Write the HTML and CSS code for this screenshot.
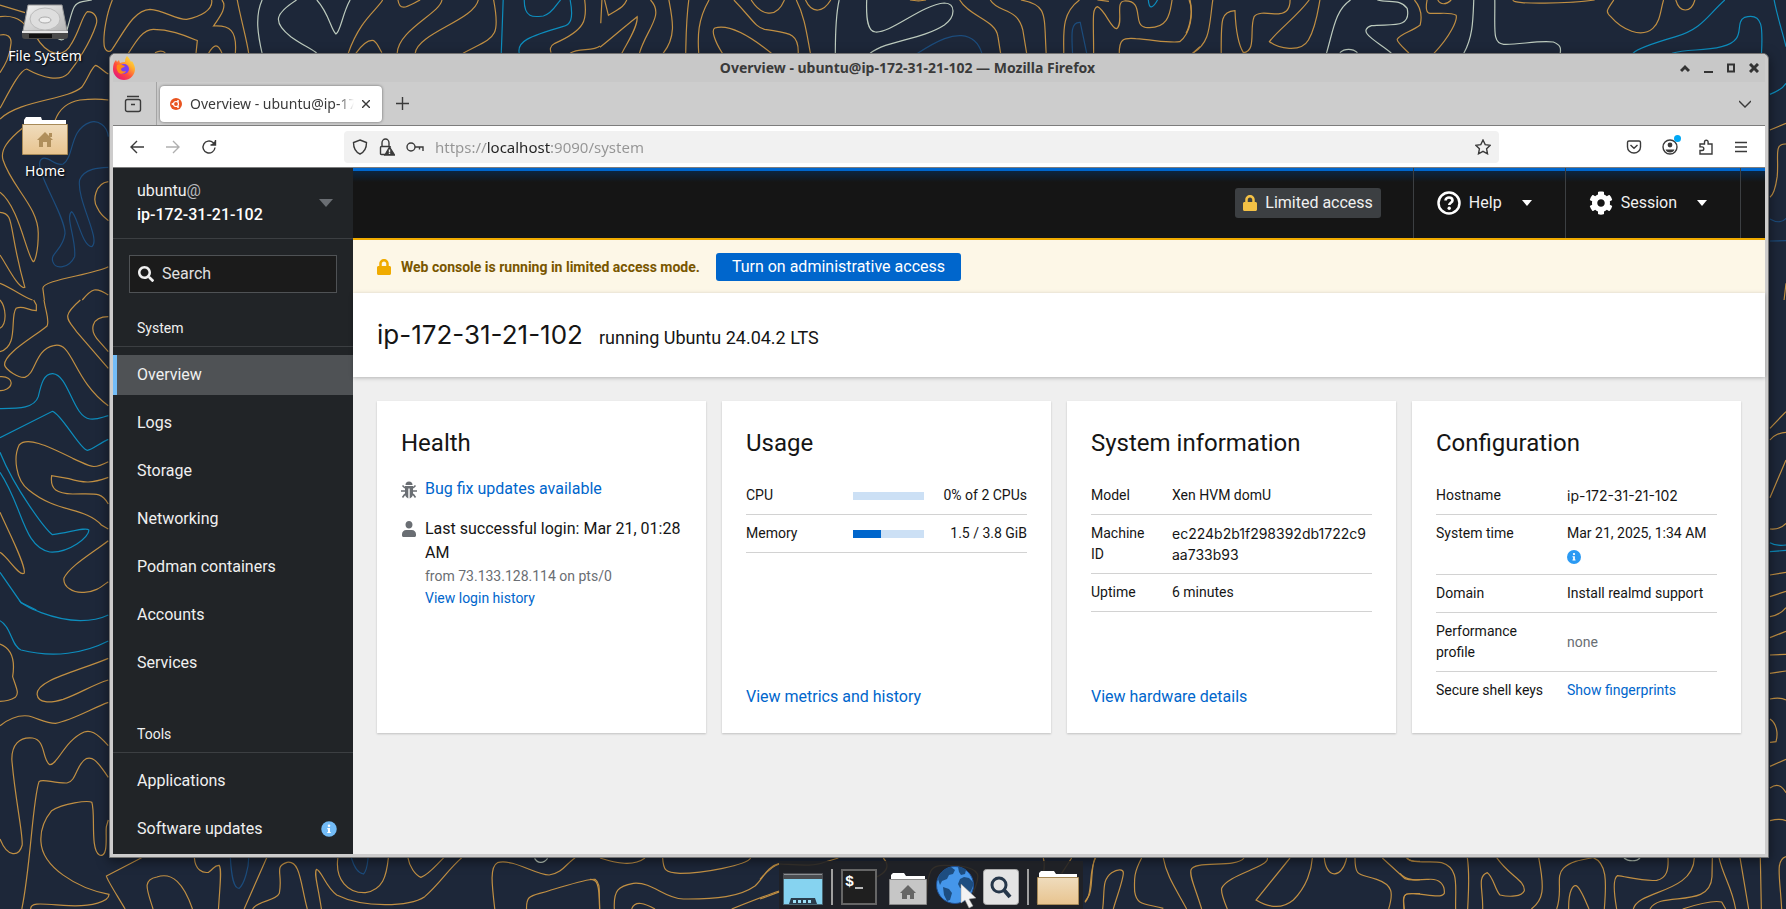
FILE: index.html
```html
<!DOCTYPE html>
<html lang="en">
<head>
<meta charset="utf-8">
<title>Overview - ubuntu@ip-172-31-21-102</title>
<link rel="stylesheet" href="styles.css">
</head>
<body>
<div class="desktop">
<svg class="wallpaper" viewBox="0 0 1786 909" preserveAspectRatio="xMidYMid slice" aria-hidden="true">
  <g class="gold">
    <g transform="scale(.33333)">
      <path d="M0 15L75 38M0 50C30 45 60 55 75 75M108 110C140 165 190 180 215 130C240 90 245 50 262 35C285 35 295 55 288 75C270 130 230 190 205 220C180 245 130 235 80 207C60 210 30 270 0 325"/>
      <path d="M0 105C20 100 35 110 33 130C30 170 15 195 0 218M337 0C320 40 310 100 312 130C312 150 325 160 335 150C370 100 400 30 450 28C490 30 530 60 560 58C600 50 640 30 635 0"/>
      <path d="M385 160C410 120 430 88 460 88C510 88 550 105 592 122L588 160M0 357C60 300 200 300 245 262C265 235 275 200 287 196C300 200 310 215 325 222M165 362C180 320 210 305 240 300C280 296 310 298 325 300"/>
    </g>
    <g transform="scale(.38265 .33333)">
      <path d="M60 383C20 420 0 450 8 480C30 560 100 620 100 700C100 760 90 785 87 785C70 770 50 620 0 577M283 545C250 550 240 600 255 625C265 650 283 660 283 662"/>
      <path d="M0 637C40 640 20 680 65 862C50 870 20 800 0 765M283 800C240 825 110 840 112 865L116 900M0 850C40 870 60 890 85 900M215 900C240 865 250 860 283 885"/>
      <path d="M580 0C595 20 575 50 558 78C600 75 620 90 615 160M545 160C560 130 570 130 580 160M405 158C415 152 425 152 432 158M620 0C630 60 645 120 650 160"/>
      <path d="M1000 0C985 30 940 60 910 160M1040 0C1045 40 1070 15 1098 0M930 160C955 120 970 120 977 122C988 130 990 145 998 158M1155 0C1150 40 1040 90 1038 160M1250 0C1240 60 1090 100 1085 160M1290 0C1310 120 1290 110 1210 160M1528 0C1535 60 1530 90 1450 130C1435 140 1438 150 1440 158M1568 138C1550 155 1510 142 1490 160"/>
    </g>
    <g transform="translate(600 0) scale(.38265 .33333)">
      <path d="M5 0L2 70M12 0L22 46C50 25 60 25 70 0M0 142C40 105 80 65 97 50C100 80 70 130 57 160M132 0C170 45 120 90 103 160M180 0C190 60 200 110 165 160M232 0C225 60 225 110 224 160M285 0C255 60 255 110 258 160"/>
      <path d="M320 160C300 125 290 90 300 84C340 70 400 115 448 160M350 0C400 60 405 80 430 88C490 100 520 95 518 160M395 0C420 45 460 60 482 0M513 0C535 50 540 100 550 160M537 0C555 45 585 35 603 0M810 0C825 3 840 3 852 0"/>
      <path d="M940 0C965 50 1035 60 1040 110L1047 160M1020 0C1040 40 1090 20 1105 90L1115 160M1100 0C1170 15 1160 40 1166 160M1253 0C1205 40 1212 100 1212 160M1290 160C1290 60 1285 25 1300 20C1320 30 1335 85 1350 86C1370 70 1345 5 1370 3C1425 0 1390 75 1425 82C1490 90 1490 30 1495 0M1300 0L1330 4M1357 160C1357 120 1365 112 1400 116C1450 120 1490 130 1515 125C1545 100 1550 40 1542 0M1568 140L1548 160"/>
    </g>
    <g transform="translate(1186 0) scale(.38265 .33333)">
      <path d="M8 0C20 30 10 80 0 100M70 0C60 80 65 125 18 160M92 160C92 60 90 35 128 32C130 90 135 130 150 158C185 155 165 85 178 50C190 30 230 45 245 41C270 38 272 15 272 0"/>
      <path d="M322 0C290 50 240 90 218 125C240 145 300 160 320 120C340 80 345 30 350 0M597 0C620 30 615 60 612 75C590 95 560 100 552 118C550 125 570 145 583 160M630 0C625 30 630 42 640 40C665 42 690 35 706 46C710 60 690 110 648 160M658 0C665 15 680 15 693 0M855 0C850 15 1010 10 1068 0M1118 0C1100 30 1095 35 1110 50C1140 90 1190 115 1220 85C1240 65 1240 30 1248 0M1280 0C1290 40 1320 40 1330 0"/>
      <path d="M1526 390L1568 370M1568 432C1535 430 1550 470 1545 530C1540 570 1535 585 1526 592M1568 850L1563 900"/>
    </g>
    <g transform="translate(0 300) scale(.38265 .33333)">
      <path d="M0 85C20 70 15 20 0 0M0 155C50 140 25 50 42 25C60 15 70 30 95 32L95 15L88 0M115 0C120 40 130 60 123 78C90 110 10 160 12 195C15 210 50 235 65 232C95 220 90 150 140 137C190 120 190 240 283 317"/>
      <path d="M210 0C160 50 175 55 200 95L283 205M283 50C240 50 230 90 260 125L283 155M0 230C20 228 30 240 29 250C28 265 10 273 0 272"/>
      <path d="M283 485C240 510 240 500 190 475C120 435 70 410 50 435C35 470 40 540 75 570C150 640 220 620 265 675L283 687M283 532C240 550 220 550 180 536L135 527C130 570 150 580 190 582C250 582 265 575 283 612M0 637C20 690 70 800 63 820C50 830 20 770 0 757M283 722C240 760 180 800 167 835C165 860 190 880 220 877C250 876 265 860 283 845"/>
    </g>
    <g transform="translate(0 600) scale(.38265 .33333)">
      <path d="M0 132C30 145 40 180 33 230C45 270 50 280 40 292C25 303 10 304 0 304M283 175C200 215 95 240 97 283C100 310 130 310 165 298C210 280 240 255 283 240M0 377C30 350 55 345 75 348C100 355 120 370 145 370C190 360 240 325 283 307"/>
      <path d="M283 437C250 395 235 390 220 396C170 420 150 495 130 494C110 480 120 420 85 414C50 410 30 435 31 480C40 600 60 700 58 735C50 770 20 775 0 717M283 532C250 475 240 470 225 476C200 490 200 545 175 549C140 550 110 535 102 545C85 600 80 800 57 927"/>
      <path d="M80 927C80 905 110 912 180 917C240 920 285 905 285 883C200 865 110 800 107 725C105 690 115 660 135 632C165 610 230 600 240 607C250 640 235 750 260 765C285 775 275 700 278 680L283 660M370 773L278 828C280 840 300 875 327 927M400 927C385 870 370 840 410 831C450 815 480 850 503 927M508 773C510 810 530 820 545 817C560 805 560 795 573 796C580 810 575 850 571 927M697 773L638 927M660 927C675 900 720 905 730 880C740 820 715 800 750 787C785 780 785 850 803 927"/>
      <path d="M840 927C830 850 820 820 827 808C840 810 850 860 880 885C950 925 1070 920 1110 890C1150 850 1170 810 1207 773M883 773C875 840 910 880 955 878C1000 870 1010 830 1015 773M1066 773C1070 800 1085 825 1100 832C1120 825 1140 795 1160 773M1293 927C1285 850 1280 800 1300 788C1340 775 1400 825 1435 825C1470 820 1480 790 1503 773M1376 927C1375 880 1390 890 1440 870C1500 850 1540 835 1555 838C1570 850 1565 870 1567 927"/>
    </g>
    <g transform="translate(590 850) scale(.33333)">
      <path d="M30 24C80 40 130 50 165 24M218 24C220 60 225 68 270 70C340 70 470 45 482 24M0 88C20 88 28 95 29 177M73 177C70 120 85 108 130 100C190 95 220 145 280 147C380 148 450 140 495 108C520 85 530 50 568 40M125 177C135 150 165 160 195 177M425 177C480 155 530 135 568 123"/>
    </g>
    <g transform="translate(760 840) scale(.33333)">
      <path d="M0 118C20 95 40 75 60 72M195 66L235 54M0 177L60 155M975 187C1000 160 985 90 1007 54"/>
      <path d="M60 72C120 75 160 80 195 66M370 54C400 90 370 115 250 140M500 190C500 60 520 75 600 78C680 90 650 120 640 160M850 54C860 90 840 130 830 190M905 100L935 54"/>
    </g>
    <g transform="translate(1070 850) scale(.33333)">
      <path d="M75 24C60 60 70 120 55 140L45 155M98 177C105 120 95 90 125 68C145 55 160 58 160 68C160 90 140 140 130 177M215 24C190 70 193 90 194 125C200 165 220 160 280 175M280 24C290 80 320 120 350 177M522 24C500 55 370 30 363 60C358 80 375 110 395 177M592 24C600 50 470 75 455 115C452 130 465 160 472 177M660 24L558 150C600 175 640 175 670 150C710 110 725 60 727 24M763 24C768 85 815 90 830 24M855 24C855 85 870 70 920 88C970 105 970 130 956 177M937 24L1005 86C1020 92 1035 89 1050 89M1010 24C1020 33 1035 35 1050 34M1003 177C995 125 1005 130 1050 131"/>
    </g>
    <g transform="translate(1400 700) scale(.33333)">
      <path d="M20 473C35 495 90 480 125 488C180 505 165 560 167 627M202 473C210 530 205 580 203 627M0 520C20 545 60 540 85 538C120 535 135 555 133 580C120 600 60 575 20 582C5 590 12 610 12 627M248 627C250 570 230 530 262 518C280 530 285 570 300 585C330 592 365 590 373 572C375 540 330 530 290 473M416 473C435 570 430 600 394 627M470 627C490 570 465 530 490 505C510 485 540 480 580 473C620 490 620 540 613 627M506 627C505 570 520 555 528 557C540 560 555 600 567 627M650 627C640 570 640 535 652 527C680 530 730 545 770 541C800 535 806 510 804 473M700 627C715 570 880 580 883 473M750 627C780 570 930 630 936 530L937 473M848 627C900 610 940 600 965 606L977 627M957 473C970 530 995 560 1007 627M1020 473L1046 627M1081 473L1084 627M1158 470C1125 480 1140 530 1145 627"/>
      <path d="M1110 57C1130 70 1135 100 1128 125L1110 127M1110 199L1158 178M1110 264C1130 250 1145 255 1158 278M1110 362C1130 357 1145 357 1158 362"/>
    </g>
    <g transform="translate(1186 380) scale(.38265 .33333)">
      <path d="M1526 145L1568 95M1526 180C1535 165 1555 157 1568 157M1568 240L1526 353M1526 447C1550 450 1560 440 1568 430M1526 585L1568 577M1526 650L1568 634M1526 710C1550 705 1560 695 1568 683M1526 773L1568 754M1526 825L1568 823M1526 880L1568 873M1526 957C1545 953 1560 955 1568 960"/>
    </g>
  </g>
  <g class="cyan">
    <path transform="scale(.38265 .33333)" d="M1315 0L1310 160M1370 0C1370 60 1400 50 1420 48C1445 40 1455 10 1465 0M1490 0C1500 60 1490 75 1470 80C1380 110 1350 125 1357 160"/>
    <path transform="translate(600 0) scale(.38265 .33333)" d="M1433 0C1435 30 1445 25 1457 0"/>
    <path transform="translate(1186 0) scale(.38265 .33333)" d="M1408 0C1360 50 1350 85 1280 110C1220 130 1180 145 1168 160M1270 160C1310 145 1350 155 1400 140C1470 120 1430 70 1460 52C1510 35 1507 90 1504 160M1537 0C1545 50 1560 100 1568 140M1526 283C1545 275 1560 265 1568 250"/>
    <path transform="translate(1186 380) scale(.38265 .33333)" d="M1526 488C1540 498 1555 497 1568 495M1526 515L1568 511"/>
    <path transform="translate(0 300) scale(.38265 .33333)" d="M0 326C50 325 90 325 100 290C108 250 115 220 138 221C180 225 190 350 235 357C255 360 270 350 283 347M0 413L137 334C160 340 210 450 228 451C240 450 260 430 283 418M0 457C40 570 120 690 137 704C180 698 225 680 232 690C235 710 180 760 130 756C60 740 60 620 0 517M0 817L55 908L95 930"/>
    <path transform="translate(0 600) scale(.38265 .33333)" d="M50 0C60 20 140 60 210 62C240 62 265 55 283 45M0 62C30 80 30 140 55 150C140 175 220 160 283 123"/>
  </g>
  <g class="navy">
    <path transform="scale(.38265 .33333)" d="M283 410C280 375 255 360 235 367C180 390 195 470 165 492C145 500 130 470 112 475C75 490 170 640 170 700C165 750 130 760 138 785C145 810 180 805 195 770C200 720 170 650 187 635C200 640 215 740 240 740C265 720 200 600 208 540C220 505 260 503 283 502"/>
    <path transform="translate(600 0) scale(.38265 .33333)" d="M830 160C890 115 920 105 945 107C975 110 990 130 998 160M1235 160C1232 100 1230 65 1255 67L1272 160"/>
    <path transform="translate(0 600) scale(.38265 .33333)" d="M602 773C605 830 610 865 625 865C640 850 650 800 650 773M918 773C925 800 935 820 950 822C960 810 960 790 962 773"/>
    <path transform="translate(1186 0) scale(.38265 .33333)" d="M1526 657C1545 670 1560 665 1568 655M1526 723L1568 722"/>
  </g>
  <g class="pale">
    <path transform="scale(.38265 .33333)" d="M150 115C165 125 170 120 175 90C190 30 190 10 215 5L240 0M685 0C665 50 675 110 685 160M775 0C720 40 710 65 760 110C790 135 820 150 828 160M828 0C860 40 865 90 878 102C890 95 895 40 915 0"/>
    <path transform="translate(600 0) scale(.38265 .33333)" d="M625 0C615 50 615 120 615 160M697 0C695 60 700 95 720 96C760 100 840 15 900 9C930 10 930 50 900 75C840 120 750 120 706 160"/>
    <path transform="translate(1186 0) scale(.38265 .33333)" d="M430 0C390 30 385 90 367 160M500 0C530 10 560 -5 578 25C590 90 530 70 485 77C440 95 510 130 537 160M402 158C415 145 435 145 448 158M752 0C750 60 750 110 726 160M807 0C808 90 800 130 830 133C870 135 920 120 960 126C980 135 980 145 978 160"/>
    <path transform="translate(0 600) scale(.38265 .33333)" d="M1397 775C1405 790 1420 792 1431 775"/>
    <path transform="translate(1400 700) scale(.33333)" d="M672 474C685 485 710 485 720 474"/>
  </g>
</svg>

<a class="shortcut shortcut-disk" href="#fs">
  <svg width="48" height="36" viewBox="0 0 48 36" aria-hidden="true">
    <defs><linearGradient id="disk" x1="0" y1="0" x2="1" y2="1"><stop offset="0" stop-color="#f4f4f4"/><stop offset="1" stop-color="#b4b4b4"/></linearGradient></defs>
    <path d="M7 1h34l5 26H2z" fill="url(#disk)" stroke="#999"/>
    <path d="M1 28h46v4q0 3-3 3H4q-3 0-3-3z" fill="#4a4a4a"/><path d="M1 27h46v2H1z" fill="#e6e6e6"/><path d="M8 30h23v4H8z" fill="#111"/>
    <ellipse cx="24" cy="15" rx="15" ry="11" fill="#dedede" stroke="#bbb"/><ellipse cx="24" cy="16" rx="6" ry="3" fill="#eee" stroke="#aaa"/>
  </svg>
  <span>File System</span>
</a>
<a class="shortcut shortcut-home" href="#home">
  <svg width="46" height="38" viewBox="0 0 46 38" aria-hidden="true">
    <defs><linearGradient id="folder" x1="0" y1="0" x2="0" y2="1"><stop offset="0" stop-color="#efdcbd"/><stop offset="1" stop-color="#e8c48f"/></linearGradient></defs>
    <path d="M2 8V3l2-3h15l1 3h24v5z" fill="#fff"/><path d="M.5 7.500h45v30H.5z" fill="url(#folder)" stroke="#a78a58"/>
    <path d="M23 15l8 8h-2v7h-4v-5h-4v5h-4v-7h-2zM27 16h3v4h-3z" fill="#b08f5b"/>
  </svg>
  <span>Home</span>
</a>

<section class="window">
  <header class="titlebar">
    <svg width="22" height="24" viewBox="0 0 22 24" aria-hidden="true">
      <defs><linearGradient id="fox" x1="1" y1="0" x2=".2" y2="1"><stop offset="0" stop-color="#fff44f"/><stop offset=".35" stop-color="#ffb02e"/><stop offset=".65" stop-color="#ff4a3d"/><stop offset="1" stop-color="#e3127f"/></linearGradient></defs>
      <path d="M14 0c3 3 3 4 4 6l1-1c2 3 3 6 3 8a11 11 0 0 1-22 0c0-4 1-7 3-9l1 2 2-2 1 3c2-1 4-1 5-1 0-3 1-5 2-6z" fill="url(#fox)"/>
      <circle cx="11" cy="13" r="5" fill="#7a3ff2"/><path d="M4 9c3-1 5 0 8 1-1 2-3 1-4 3 0 2 2 3 5 2-1 3-6 4-8 1-1-2-2-4-1-7z" fill="#ff8a16"/>
    </svg>
    <span class="window-title">Overview - ubuntu@ip-172-31-21-102 — Mozilla Firefox</span>
    <div class="window-controls">
      <button aria-label="Roll up"><svg width="10" height="10"><path d="M1 8l4-4 4 4" stroke-width="3"/></svg></button>
      <button aria-label="Minimize"><svg width="10" height="10"><path d="M1 9h9" stroke-width="2"/></svg></button>
      <button aria-label="Maximize"><svg width="10" height="10"><path d="M2 1.500h6v7H2z" stroke-width="2"/></svg></button>
      <button aria-label="Close window"><svg width="10" height="10"><path d="M1 1l8 8M9 1l-8 8" stroke-width="3"/></svg></button>
    </div>
  </header>

  <div class="tabbar">
    <button class="view-button" aria-label="Firefox View"><svg class="line" width="18" height="18"><path d="M3 1.500h12M1.500 6.500q0-2 2-2h11q2 0 2 2v8q0 2-2 2h-11q-2 0-2-2zM7 9.500h4"/></svg></button>
    <div class="tab">
      <svg width="12" height="12" viewBox="0 0 12 12" aria-hidden="true"><circle cx="6" cy="6" r="6" fill="#e95420"/><circle cx="6" cy="6" r="2.500" fill="none" stroke="#fff" stroke-width="1.200"/><circle cx="2.500" cy="6" r="1" fill="#fff"/><circle cx="8" cy="3" r="1" fill="#fff"/><circle cx="8" cy="9" r="1" fill="#fff"/></svg>
      <span class="tab-label">Overview - ubuntu@ip-172-31-21-102</span>
      <button aria-label="Close tab"><svg class="line" width="8" height="8"><path d="M0 0l8 8M8 0l-8 8"/></svg></button>
    </div>
    <button class="new-tab" aria-label="New tab"><svg class="line" width="13" height="13"><path d="M6.500 0v13M0 6.500h13"/></svg></button>
    <button class="all-tabs" aria-label="List all tabs"><svg class="line" width="12" height="8"><path d="M0 1l6 6 6-6"/></svg></button>
  </div>

  <div class="toolbar">
    <button aria-label="Back"><svg class="line" width="16" height="16"><path d="M15 8H2M8 2L2 8l6 6"/></svg></button>
    <button class="dim" aria-label="Forward"><svg class="line" width="16" height="16"><path d="M1 8h13M8 2l6 6-6 6"/></svg></button>
    <button aria-label="Reload"><svg class="line" width="16" height="16"><path d="M14 8.500a6 6 0 1 1-2-5l2 2M14.500 1v5h-5"/><path d="M15 1v5h-5z" fill="#3a3a3a" stroke="none"/></svg></button>
    <div class="urlbar">
      <svg class="line" width="16" height="16"><path d="M8 1l6.500 2.500c0 6-2 9.500-6.500 11.500-4.500-2-6.500-5.500-6.500-11.500z"/></svg>
      <svg class="line" width="16" height="18"><path d="M6 16.500H2.500q-1 0-1-1v-6q0-1 1-1h8q1 0 1 1M3 8.500V5a3.500 4 0 0 1 7 0v3.500"/><path d="M10.500 9l5 8h-9.500z" fill="#3a3a3a"/><path d="M10.500 11.500v3M10.500 15v1" stroke="#f0f0f0"/></svg>
      <svg class="line" width="18" height="12"><circle cx="5" cy="6" r="4"/><path d="M9 6h8v4M13.500 6v2.500"/></svg>
      <input class="url" type="text" aria-label="Address" value="https://localhost:9090/system">
      <button aria-label="Bookmark this page"><svg class="line" width="16" height="16"><path d="M8 1l2.200 4.600 5 .7-3.600 3.500.9 5L8 12.400l-4.500 2.400.9-5L.8 6.300l5-.7z"/></svg></button>
    </div>
    <div class="toolbar-end">
      <button aria-label="Pocket"><svg class="line" width="16" height="16"><path d="M1.500 3.500q0-1.500 1.500-1.500h10q1.500 0 1.500 1.500V8a6.500 6 0 0 1-13 0zM4.500 6L8 9.300 11.500 6"/></svg></button>
      <button class="account" aria-label="Account"><svg class="line" width="16" height="16"><circle cx="8" cy="8" r="7"/><circle cx="8" cy="6" r="2.400" fill="#3a3a3a" stroke="none"/><path d="M3.500 10.500h9q-1 3-4.500 3t-4.500-3z" fill="#3a3a3a" stroke="none"/></svg></button>
      <button aria-label="Extensions"><svg class="line" width="16" height="16"><path d="M2 15v-3.500h2a1.800 1.800 0 0 0 0-3.600H2V5h4.500V3a1.800 1.800 0 0 1 3.600 0v2H14v10z"/></svg></button>
      <button aria-label="Menu"><svg class="line" width="14" height="12"><path d="M1 1.500h12M1 6h12M1 10.500h12"/></svg></button>
    </div>
  </div>

  <div class="console">
    <aside class="sidebar">
      <button class="host">
        <span>ubuntu<span class="at">@</span><br><strong>ip-172-31-21-102</strong></span>
        <svg width="14" height="8" aria-hidden="true"><path d="M0 0h14L7 8z" fill="#6a6e73"/></svg>
      </button>
      <label class="search">
        <svg width="16" height="16" viewBox="0 0 512 512" aria-hidden="true"><path fill="currentColor" d="M505 442.700L405.300 343c-4.500-4.500-10.600-7-17-7H372c27.600-35.300 44-79.700 44-128C416 93.100 322.900 0 208 0S0 93.100 0 208s93.100 208 208 208c48.300 0 92.700-16.400 128-44v16.300c0 6.400 2.500 12.500 7 17l99.700 99.700c9.400 9.400 24.600 9.400 33.900 0l28.300-28.300c9.400-9.400 9.400-24.600.1-34zM208 336c-70.700 0-128-57.200-128-128 0-70.700 57.200-128 128-128 70.700 0 128 57.200 128 128 0 70.700-57.200 128-128 128z"/></svg>
        <input type="text" placeholder="Search" aria-label="Search">
      </label>
      <nav>
        <h2>System</h2>
        <ul>
          <li><a class="active" href="#overview">Overview</a></li>
          <li><a href="#logs">Logs</a></li>
          <li><a href="#storage">Storage</a></li>
          <li><a href="#networking">Networking</a></li>
          <li><a href="#podman">Podman containers</a></li>
          <li><a href="#accounts">Accounts</a></li>
          <li><a href="#services">Services</a></li>
        </ul>
        <h2>Tools</h2>
        <ul>
          <li><a href="#applications">Applications</a></li>
          <li><a href="#updates">Software updates
            <svg width="16" height="16" viewBox="0 0 512 512" aria-hidden="true"><circle cx="256" cy="256" r="248" fill="#73bcf7"/><path fill="#fff" d="M256 108a42 42 0 1 1 0 84 42 42 0 0 1 0-84zM200 226h88v122h24v36H200v-36h24v-86h-24z"/></svg></a></li>
        </ul>
      </nav>
    </aside>

    <main class="main">
      <header class="masthead">
        <button class="limited">
          <svg width="14" height="16" viewBox="0 0 448 512" aria-hidden="true"><path fill="#f4c145" d="M400 224h-24v-72C376 68.200 307.800 0 224 0S72 68.200 72 152v72H48c-26.500 0-48 21.500-48 48v192c0 26.500 21.500 48 48 48h352c26.500 0 48-21.500 48-48V272c0-26.500-21.500-48-48-48zm-104 0H152v-72c0-39.700 32.300-72 72-72s72 32.300 72 72v72z"/></svg>
          Limited access
        </button>
        <button class="menu menu-help">
          <svg width="24" height="24" viewBox="0 0 24 24" aria-hidden="true"><circle cx="12" cy="12" r="10.500" fill="none" stroke="#fff" stroke-width="2.500"/><path d="M8.500 9.500C8.500 5.500 15.500 5.500 15.500 9.500c0 2-3.300 2.500-3.300 4.500" fill="none" stroke="#fff" stroke-width="2.600"/><circle cx="12.200" cy="17.200" r="1.700" fill="#fff"/></svg>
          Help
          <svg class="caret" width="10" height="6" aria-hidden="true"><path d="M0 0h10L5 6z" fill="#fff"/></svg>
        </button>
        <button class="menu menu-session">
          <svg width="24" height="24" viewBox="0 0 512 512" aria-hidden="true"><path fill="#fff" d="M487.400 315.700l-42.600-24.600c4.300-23.200 4.300-47 0-70.200l42.600-24.600c4.900-2.800 7.100-8.600 5.500-14-11.100-35.600-30-67.800-54.700-94.600-3.800-4.100-10-5.100-14.800-2.300L380.800 110c-17.900-15.400-38.500-27.300-60.800-35.100V25.800c0-5.600-3.900-10.500-9.400-11.700-36.700-8.200-74.300-7.800-109.200 0-5.500 1.200-9.400 6.100-9.400 11.700V75c-22.200 7.900-42.800 19.800-60.800 35.100L88.700 85.500c-4.900-2.800-11-1.900-14.800 2.300-24.700 26.700-43.600 58.900-54.700 94.600-1.700 5.400.6 11.200 5.500 14L67.300 221c-4.300 23.200-4.300 47 0 70.200l-42.600 24.600c-4.900 2.800-7.100 8.600-5.500 14 11.100 35.600 30 67.800 54.700 94.600 3.800 4.100 10 5.100 14.800 2.300l42.600-24.600c17.900 15.400 38.500 27.300 60.800 35.100v49.200c0 5.600 3.900 10.500 9.400 11.700 36.700 8.200 74.300 7.800 109.200 0 5.500-1.200 9.400-6.100 9.400-11.700v-49.200c22.200-7.900 42.800-19.800 60.800-35.100l42.600 24.600c4.900 2.800 11 1.900 14.800-2.300 24.700-26.700 43.600-58.900 54.700-94.600 1.500-5.500-.7-11.300-5.600-14.100zM256 336c-44.100 0-80-35.900-80-80s35.900-80 80-80 80 35.900 80 80-35.900 80-80 80z"/></svg>
          Session
          <svg class="caret" width="10" height="6" aria-hidden="true"><path d="M0 0h10L5 6z" fill="#fff"/></svg>
        </button>
      </header>

      <div class="notice">
        <svg width="14" height="16" viewBox="0 0 448 512" aria-hidden="true"><path fill="#f0ab00" d="M400 224h-24v-72C376 68.200 307.800 0 224 0S72 68.200 72 152v72H48c-26.500 0-48 21.500-48 48v192c0 26.500 21.500 48 48 48h352c26.500 0 48-21.500 48-48V272c0-26.500-21.500-48-48-48zm-104 0H152v-72c0-39.700 32.300-72 72-72s72 32.300 72 72v72z"/></svg>
        <strong>Web console is running in limited access mode.</strong>
        <button>Turn on administrative access</button>
      </div>

      <div class="page-head">
        <h1>ip-172-31-21-102</h1>
        <span>running Ubuntu 24.04.2 LTS</span>
      </div>

      <div class="cards">
        <section class="card">
          <h2>Health</h2>
          <ul class="health">
            <li>
              <svg width="16" height="18" viewBox="0 0 16 18" aria-hidden="true"><path d="M4.500 4a3.500 3.500 0 0 1 7 0zM4 5h8v9q-1 3-3.300 3.500V7.500H7.300v10Q5 17 4 14z" fill="#6a6e73"/><path d="M4 7L1.500 4.500M12 7l2.500-2.500M4 10H0M12 10h4M4 13l-2.500 3.500M12 13l2.500 3.500" stroke="#6a6e73" stroke-width="1.600" fill="none"/></svg>
              <a href="#bugfix">Bug fix updates available</a>
            </li>
            <li>
              <svg width="16" height="16" viewBox="0 0 448 512" aria-hidden="true"><path fill="#6a6e73" d="M224 240c66 0 112-52 112-120S290 0 224 0 112 52 112 120s46 120 112 120zm90 48H134C60 288 0 348 0 422v42c0 26 21 48 48 48h352c27 0 48-22 48-48v-42c0-74-60-134-134-134z"/></svg>
              <div>
                <p>Last successful login: Mar 21, 01:28 AM</p>
                <p class="small">from 73.133.128.114 on pts/0</p>
                <p class="small"><a href="#logins">View login history</a></p>
              </div>
            </li>
          </ul>
        </section>

        <section class="card">
          <h2>Usage</h2>
          <table class="usage">
            <tr><th>CPU</th><td><div class="meter"></div></td><td>0% of 2 CPUs</td></tr>
            <tr><th>Memory</th><td><div class="meter"><div style="width:39%"></div></div></td><td>1.5 / 3.8 GiB</td></tr>
          </table>
          <a class="card-link" href="#metrics">View metrics and history</a>
        </section>

        <section class="card">
          <h2>System information</h2>
          <table class="sysinfo">
            <tr><th>Model</th><td>Xen HVM domU</td></tr>
            <tr><th>Machine ID</th><td class="ident">ec224b2b1f298392db1722c9<br>aa733b93</td></tr>
            <tr><th>Uptime</th><td>6 minutes</td></tr>
          </table>
          <a class="card-link" href="#hardware">View hardware details</a>
        </section>

        <section class="card">
          <h2>Configuration</h2>
          <table class="config">
            <tr><th>Hostname</th><td class="ident">ip-172-31-21-102</td></tr>
            <tr><th>System time</th><td>Mar 21, 2025, 1:34 AM<br><svg class="info" width="14" height="14" viewBox="0 0 512 512" aria-hidden="true"><circle cx="256" cy="256" r="256" fill="#2b9af3"/><path fill="#fff" d="M256 108a42 42 0 1 1 0 84 42 42 0 0 1 0-84zM200 226h88v122h24v36H200v-36h24v-86h-24z"/></svg></td></tr>
            <tr><th>Domain</th><td>Install realmd support</td></tr>
            <tr><th>Performance profile</th><td class="muted">none</td></tr>
            <tr><th>Secure shell keys</th><td><a href="#ssh">Show fingerprints</a></td></tr>
          </table>
        </section>
      </div>
    </main>
  </div>
</section>

<nav class="dock" aria-label="Dock">
  <button aria-label="Show desktop"><svg width="40" height="32" viewBox="0 0 40 32"><path d="M.5.5h39v31H.5z" fill="#86d3f0" stroke="#4a6874"/><path d="M0 0h40v6H0z" fill="#4a4c50"/><path d="M1 1h38v1H1z" fill="#8d9094"/><path d="M6 31l2-6h24l2 6z" fill="#2b3d4c"/><path d="M10 27h3v3h-3zM15 27h3v3h-3zM20 27h3v3h-3zM25 27h3v3h-3z" fill="#9be0f7"/></svg></button>
  <span class="divider"></span>
  <button aria-label="Terminal"><svg width="36" height="36" viewBox="0 0 36 36"><path d="M1 1h34v34H1z" fill="#1f1f1f" stroke="#666" stroke-width="2"/><text class="prompt" x="4" y="17">$</text><path d="M14 19h8" stroke="#eee" stroke-width="1.500"/></svg></button>
  <button class="dock-home" aria-label="Home folder"><svg width="38" height="32" viewBox="0 0 38 32"><path d="M2 8V2l2-2h11l2 3h19v5z" fill="#fff"/><path d="M.5 6.500h37v25H.5z" fill="#c6c6c6" stroke="#888"/><path d="M19 12l8 8h-2v6h-4v-4h-3v4h-5v-6h-2z" fill="#666"/></svg></button>
  <button aria-label="Web browser"><svg width="40" height="40" viewBox="0 0 40 40"><circle cx="20" cy="20" r="18.500" fill="#4596ea" stroke="#1f4f93"/><path d="M3 14C5 7 10 3 16 2l4 3-2 4-4 1-2 4-5 2-2 4zM8 22l6 2 3 4-2 7-3 1-3-6zM23 2c3 0 6 1 8 3l-1 4-4 1-2-3zM38 17l-4-4-5-1-4 2-2 5 2 4 5 1 2 6 4-4 2-5z" fill="#1d4d80"/></svg></button>
  <button aria-label="Application finder"><svg width="36" height="36" viewBox="0 0 36 36"><rect x=".5" y=".5" width="35" height="35" rx="3" fill="#e4e4e4" stroke="#aaa"/><circle cx="16" cy="16" r="7" fill="none" stroke="#26374a" stroke-width="3"/><path d="M21 21l6 7" stroke="#26374a" stroke-width="4"/></svg></button>
  <span class="divider"></span>
  <button aria-label="Files"><svg width="42" height="34" viewBox="0 0 42 34"><path d="M2 8V2l2-2h13l2 3h21v5z" fill="#fff"/><path d="M.5 6.500h41v27H.5z" fill="url(#folder)" stroke="#a78a58"/></svg></button>
</nav>
<svg class="cursor" width="18" height="26" viewBox="0 0 18 26" aria-hidden="true"><path d="M1 1v19l4-3 4 8 4-2-4-7 7-1z" fill="#f2f2f2" stroke="#999" stroke-width=".5"/></svg>
</div>
</body>
</html>
```
FILE: styles.css
```css
* { box-sizing: border-box; }
body { margin: 0; font-family: Roboto, "Liberation Sans", sans-serif; font-size: 16px; line-height: 24px; color: #151515; }
button, input { font: inherit; color: inherit; border: 0; padding: 0; background: none; }
button { cursor: pointer; }
svg { display: block; flex: none; }
a { color: #06c; text-decoration: none; }
h1, h2, p, ul { margin: 0; padding: 0; font-weight: 400; }
ul { list-style: none; }

.desktop { position: relative; height: 100vh; overflow: hidden; background: #1d2739; }
.wallpaper { position: absolute; inset: 0; width: 100%; height: 100%; fill: none; }
.wallpaper path { vector-effect: non-scaling-stroke; stroke-width: 1.2px; }
.gold { stroke: #c08f43; }
.cyan { stroke: #0d8dbd; }
.navy { stroke: #1c4c7c; }
.pale { stroke: #bccabd; }

.shortcut { position: absolute; left: 0; width: 90px; display: flex; flex-direction: column; align-items: center; gap: 4px; color: #fff; font: 14px/24px "Noto Sans", sans-serif; text-shadow: 1px 1px 2px #000; }
.shortcut-disk { top: 4px; }
.shortcut-home { top: 117px; }

.window { position: absolute; inset: 53px 17px 51px 109px; display: flex; flex-direction: column; padding: 0 3px 3px; border: 1px solid #747474; border-radius: 6px 6px 0 0; background: #cdcccc; box-shadow: 0 3px 12px rgba(0, 0, 0, .5); }
.titlebar { display: flex; align-items: center; height: 28px; background: #c8c8c8; font-family: "Noto Sans", sans-serif; }
.window-title { flex: 1; text-align: center; font-size: 14px; font-weight: 700; color: #3a3a3a; }
.window-controls { display: flex; gap: 13px; padding-right: 6px; }
.window-controls svg { fill: none; stroke: #333; }
.line { fill: none; stroke: #3a3a3a; stroke-width: 1.4px; }

.tabbar { display: flex; align-items: center; height: 44px; border-bottom: 1px solid #7d7d7d; background: #cdcdcd; }
.view-button { display: flex; align-items: center; align-self: stretch; padding: 0 14px 0 11px; margin-right: 3px; border-right: 1px solid #a5a5a5; }
.tab { display: flex; align-items: center; width: 222px; height: 36px; padding: 0 12px 0 10px; gap: 8px; border-radius: 4px; background: #fff; box-shadow: 0 0 3px rgba(0, 0, 0, .5); }
.tab-label { flex: 1; overflow: hidden; white-space: nowrap; font-family: "Noto Sans", sans-serif; font-size: 14px; color: #3a3a3a; mask-image: linear-gradient(90deg, #000 90%, transparent); }
.new-tab { margin-left: 14px; }
.all-tabs { margin-left: auto; margin-right: 14px; }

.toolbar { display: flex; align-items: center; gap: 20px; height: 42px; padding: 0 17px 0 16px; border-bottom: 1px solid #7d7d7d; background: #fff; }
.dim { opacity: .4; }
.urlbar { display: flex; align-items: center; flex: 1; gap: 11px; height: 32px; margin: 0 107px; padding: 0 8px; border-radius: 4px; background: #f1f1f1; }
.url { flex: 1; height: 24px; outline: 0; font-family: "Noto Sans", sans-serif; font-size: 15px; color: transparent; background: linear-gradient(90deg, #949494 51px, #222 51px 115px, #949494 115px); background-clip: text; -webkit-background-clip: text; }
.toolbar-end { display: flex; align-items: center; gap: 20px; }
.account { position: relative; }
.account::after { content: ""; position: absolute; top: -4px; right: -3px; width: 7px; height: 7px; border-radius: 50%; background: #00a8f5; }

.console { display: flex; flex: 1; min-height: 0; }
.sidebar { width: 240px; flex: none; overflow: hidden; background: #212427; color: #f0f0f0; }
.host { display: flex; align-items: center; justify-content: space-between; width: 100%; height: 71px; padding: 0 20px 0 24px; border-bottom: 1px solid #3c3f42; text-align: left; }
.host strong { font-weight: 500; color: #fff; }
.at { color: #b8bbbe; }
.search { display: flex; align-items: center; gap: 8px; height: 38px; margin: 16px; padding: 0 8px; border: 1px solid #4f5255; background: #1b1b1b; }
.search input { flex: 1; min-width: 0; }
.search input::placeholder { color: #e0e0e0; opacity: 1; }
.sidebar h2 { padding: 8px 24px 7px; border-bottom: 1px solid #3c3f42; font-size: 14px; line-height: 22px; }
.sidebar ul { display: flex; flex-direction: column; gap: 8px; padding: 8px 0 32px; }
.sidebar a { display: flex; align-items: center; justify-content: space-between; height: 40px; padding: 0 16px 0 20px; border-left: 4px solid transparent; color: #f0f0f0; }
.sidebar a.active { border-color: #73bcf7; background: #4f5255; }

.main { flex: 1; min-width: 0; background: #efefef; }
.masthead { display: flex; align-items: center; justify-content: flex-end; height: 70px; padding-right: 24px; background: linear-gradient(#06c 3px, #0b2540 3px, #151515 14px); color: #f0f0f0; }
.limited { display: flex; align-items: center; gap: 8px; height: 30px; margin-right: 32px; padding: 0 8px; border-radius: 3px; background: #3c3f42; }
.menu { display: flex; align-items: center; gap: 8px; height: 70px; padding: 0 33px 0 23px; border-left: 1px solid #3c3f42; }
.menu-session { border-right: 1px solid #3c3f42; }
.caret { margin-left: 12px; }

.notice { display: flex; align-items: center; height: 55px; padding: 0 24px; border-top: 2px solid #f0ab00; background: #fdf7e7; }
.notice strong { margin: 0 16px 0 10px; font-size: 14px; font-weight: 700; color: #795600; }
.notice button { height: 28px; padding: 0 16px; border-radius: 3px; background: #06c; color: #fff; }
.page-head { display: flex; align-items: baseline; gap: 16px; padding: 24px; background: #fff; box-shadow: 0 1px 4px rgba(0, 0, 0, .25); }
h1 { font-family: Inter, sans-serif; font-size: 26px; line-height: 36px; }
.page-head span { font-size: 18px; }

.cards { display: grid; grid-template-columns: repeat(4, minmax(0, 1fr)); gap: 16px; padding: 24px; }
.card { display: flex; flex-direction: column; padding: 24px; background: #fff; box-shadow: 0 1px 2px rgba(0, 0, 0, .2); }
.card h2 { margin-bottom: 16px; font-size: 24px; line-height: 36px; }
.health { display: flex; flex-direction: column; gap: 16px; }
.health li { display: flex; gap: 8px; }
.health svg { margin-top: 4px; }
.small { font-size: 14px; line-height: 22px; color: #6a6e73; }
table { width: 100%; table-layout: fixed; border-collapse: collapse; font-size: 14px; line-height: 21px; }
th, td { padding: 8px 0; border-bottom: 1px solid #d2d2d2; font-weight: 400; text-align: left; vertical-align: top; }
th { padding-right: 16px; }
.usage th { width: 107px; }
.usage td:nth-child(2) { width: 71px; vertical-align: middle; }
.usage td:last-child { text-align: right; }
.meter { height: 8px; background: #cce0f5; }
.meter div { height: 100%; background: #06c; }
.sysinfo th { width: 81px; }
.config th { width: 131px; }
.config tr:last-child > * { border-bottom: 0; }
.ident { font-family: Inter, sans-serif; }
.info { margin: 6px 0 2px; }
.config .muted { color: #6a6e73; vertical-align: middle; }
.card-link { margin-top: auto; }

.dock { position: absolute; left: 779px; bottom: 0; display: flex; align-items: flex-end; gap: 8px; height: 48px; padding: 0 4px 4px; background: rgba(32, 33, 36, .88); }
.dock-home { margin-left: 4px; }
.divider { width: 2px; height: 36px; background: #a0a0a0; }
.prompt { font: 700 15px "Liberation Mono", monospace; fill: #fff; }
.cursor { position: absolute; left: 960px; bottom: 0; }
```
